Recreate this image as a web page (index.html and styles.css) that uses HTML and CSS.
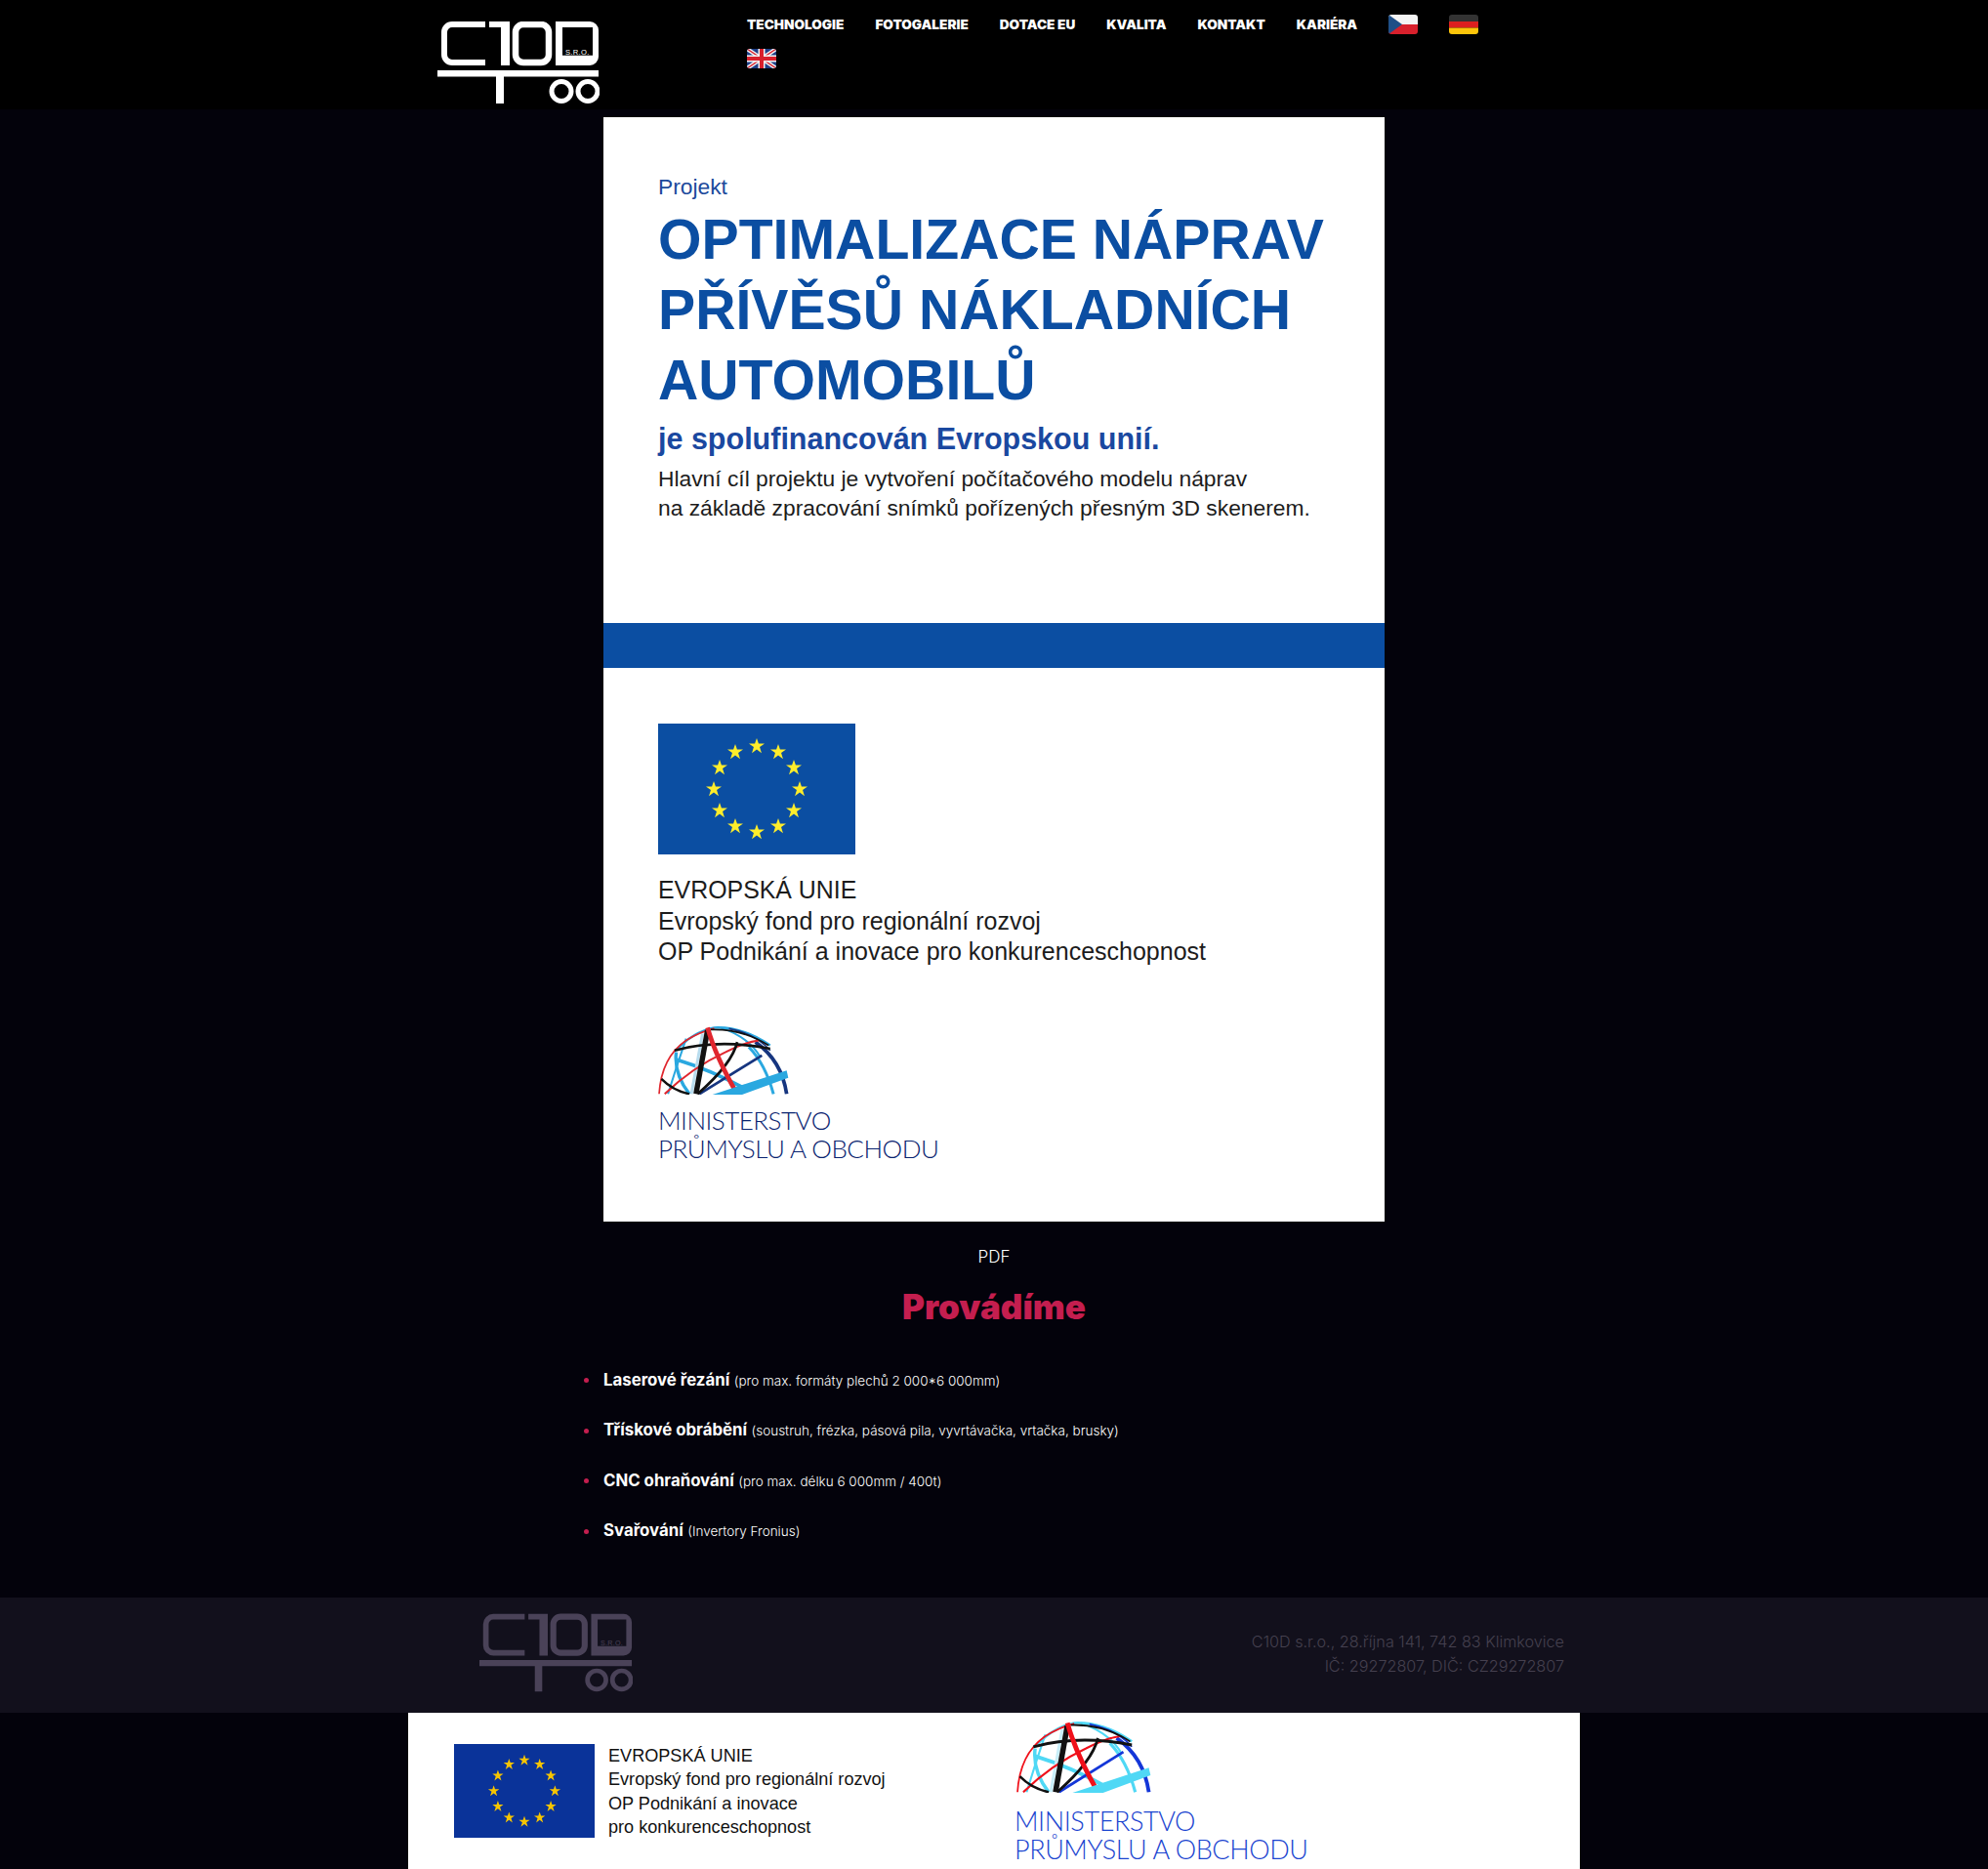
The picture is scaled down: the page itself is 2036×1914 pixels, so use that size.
FILE: index.html
```html
<!DOCTYPE html>
<html lang="cs">
  <head>
    <meta charset="UTF-8" />
    <title>C10D s.r.o. - Dotace EU</title>
    <link rel="stylesheet" href="styles.css">
  </head>
  <body>
    <svg class="defs" width="0" height="0" aria-hidden="true">
      <defs>
        <g id="logo">
          <g fill="none" stroke="currentColor">
            <path d="M57 15H23a8 8 0 0 0-8 8V46a8 8 0 0 0 8 8H57" stroke-width="6" />
            <rect x="88" y="15" width="34" height="39" rx="8" stroke-width="6.5" />
            <circle cx="135" cy="83.5" r="10" stroke-width="5" />
            <circle cx="162" cy="83.5" r="10" stroke-width="5" />
          </g>
          <path fill="currentColor" d="M61 12h21v45h-9V18H61z" />
          <path fill="currentColor" fill-rule="evenodd" d="M129 12h35a9 9 0 0 1 9 9V48a9 9 0 0 1-9 9H129zM136 18V46.7H167V18z" />
          <path fill="currentColor" d="M8 62h165v6.5H8zM68 68h8v28h-8z" />
        </g>
      </defs>
      <symbol id="star" viewBox="0 0 20 20">
        <polygon points="10,0 12.4,7 20,7 13.8,11.4 16.2,19 10,14.4 3.8,19 6.2,11.4 0,7 7.6,7" />
      </symbol>
      <symbol id="euflag" viewBox="0 0 202 134" preserveAspectRatio="none">
        <rect width="202" height="134" class="eu-bg" />
        <g class="eu-stars">
          <use href="#star" x="93" y="15" width="16" height="16" />
          <use href="#star" x="115" y="21" width="16" height="16" />
          <use href="#star" x="131" y="37" width="16" height="16" />
          <use href="#star" x="137" y="59" width="16" height="16" />
          <use href="#star" x="131" y="81" width="16" height="16" />
          <use href="#star" x="115" y="97" width="16" height="16" />
          <use href="#star" x="93" y="103" width="16" height="16" />
          <use href="#star" x="71" y="97" width="16" height="16" />
          <use href="#star" x="55" y="81" width="16" height="16" />
          <use href="#star" x="49" y="59" width="16" height="16" />
          <use href="#star" x="55" y="37" width="16" height="16" />
          <use href="#star" x="71" y="21" width="16" height="16" />
        </g>
      </symbol>
      <symbol id="globe" viewBox="45 38 397 204" preserveAspectRatio="none">
        <g fill="none" stroke-linecap="butt">
          <path class="g-sky" stroke-width="7" d="M100 110Q150 55 215 42Q300 38 385 95" />
          <path class="g-sky" stroke-width="10" d="M100 115Q92 180 140 240" />
          <path class="g-sky" stroke-width="11" d="M100 137Q210 170 310 225" />
          <path class="g-sky" stroke-width="9" d="M320 100Q370 150 395 240" />
          <path class="g-sky" stroke-width="6" d="M235 42Q320 70 355 130" />
          <path class="g-sky" stroke-width="6" d="M130 75Q100 160 75 240" />
          <path class="g-pale" stroke-width="9" d="M146 240L180 60" />
          <path class="g-navy" stroke-width="8" d="M170 240L360 125" />
          <path class="g-navy" stroke-width="11" d="M340 85Q420 140 435 240" />
          <path class="g-navy" stroke-width="5" d="M260 45Q340 60 385 110" />
          <path class="g-red" stroke-width="5" d="M48 240Q55 130 130 80Q170 55 215 44" />
          <path class="g-red" stroke-width="6" d="M65 240Q150 160 250 115Q310 85 350 80" />
          <path stroke="#111" stroke-width="8" d="M95 110Q230 75 385 105" />
          <path stroke="#111" stroke-width="7" d="M55 195Q90 230 140 240" />
          <path stroke="#111" stroke-width="8" d="M165 240Q270 150 285 85" />
          <path stroke="#111" stroke-width="5" d="M205 48Q300 45 380 95" />
          <path stroke="#111" stroke-width="16" d="M160 240L195 50" />
          <path class="g-red" stroke-width="14" d="M195 42Q220 130 285 240" />
        </g>
        <path class="g-wedge" d="M210 242L435 170L440 192L300 242Z" />
      </symbol>
    </svg>

    <header class="site-header">
      <div class="container header-row">
        <a class="logo" href="#">
          <svg viewBox="8 12 166 86" width="166" height="86">
            <use href="#logo" />
            <text x="139" y="45.5" class="logo-sro" fill="currentColor">S.R.O.</text>
          </svg>
        </a>
        <nav class="main-nav">
          <a href="#">Technologie</a>
          <a href="#">Fotogalerie</a>
          <a href="#">Dotace EU</a>
          <a href="#">Kvalita</a>
          <a href="#">Kontakt</a>
          <a href="#">Kariéra</a>
          <a class="flag" href="#">
            <svg viewBox="0 0 30 20" width="30" height="20">
              <rect width="30" height="10" fill="#f4f4f4" />
              <rect y="10" width="30" height="10" fill="#d8202c" />
              <polygon points="0,0 14,10 0,20" fill="#1f4f87" />
            </svg>
          </a>
          <a class="flag" href="#">
            <svg viewBox="0 0 30 20" width="30" height="20">
              <rect width="30" height="7" fill="#333" />
              <rect y="7" width="30" height="6.5" fill="#dc1f1f" />
              <rect y="13.5" width="30" height="6.5" fill="#fcc50a" />
            </svg>
          </a>
          <a class="flag" href="#">
            <svg viewBox="0 0 30 20" width="30" height="20">
              <rect width="30" height="20" fill="#1f3f87" />
              <path d="M0 0L30 20M30 0L0 20" stroke="#f4f4f4" stroke-width="4" />
              <path d="M0 0L30 20M30 0L0 20" stroke="#d8202c" stroke-width="1.4" />
              <path d="M15 0V20M0 10H30" stroke="#f4f4f4" stroke-width="7" />
              <path d="M15 0V20M0 10H30" stroke="#d8202c" stroke-width="4" />
            </svg>
          </a>
        </nav>
      </div>
    </header>

    <main class="content">
      <section class="poster">
        <div class="poster-top">
          <p class="poster-kicker">Projekt</p>
          <h1>OPTIMALIZACE NÁPRAV PŘÍVĚSŮ NÁKLADNÍCH AUTOMOBILŮ</h1>
          <p class="poster-sub">je spolufinancován Evropskou unií.</p>
          <p class="poster-text">Hlavní cíl projektu je vytvoření počítačového modelu náprav<br>na základě zpracování snímků pořízených přesným 3D skenerem.</p>
        </div>
        <div class="poster-band"></div>
        <div class="poster-bottom">
          <svg class="poster-flag" width="202" height="134"><use href="#euflag" /></svg>
          <p class="poster-eu">
            <span class="poster-eu-head">EVROPSKÁ UNIE</span><br>
            Evropský fond pro regionální rozvoj<br>
            OP Podnikání a inovace pro konkurenceschopnost
          </p>
          <svg class="poster-globe" width="134" height="70"><use href="#globe" /></svg>
          <p class="poster-mpo">MINISTERSTVO<br>PRŮMYSLU A OBCHODU</p>
        </div>
      </section>

      <a class="pdf-link" href="#">PDF</a>
      <h2>Provádíme</h2>

      <ul class="services">
        <li><span><strong>Laserové řezání</strong> <small>(pro max. formáty plechů 2 000*6 000mm)</small></span></li>
        <li><span><strong>Třískové obrábění</strong> <small>(soustruh, frézka, pásová pila, vyvrtávačka, vrtačka, brusky)</small></span></li>
        <li><span><strong>CNC ohraňování</strong> <small>(pro max. délku 6 000mm / 400t)</small></span></li>
        <li><span><strong>Svařování</strong> <small>(Invertory Fronius)</small></span></li>
      </ul>
    </main>

    <footer class="site-footer">
      <div class="footer-row">
        <svg class="footer-logo" viewBox="8 12 166 86" width="157" height="83">
          <use href="#logo" />
          <text x="139" y="45.5" class="logo-sro" fill="currentColor">S.R.O.</text>
        </svg>
        <p>C10D s.r.o., 28.října 141, 742 83 Klimkovice<br>IČ: 29272807, DIČ: CZ29272807</p>
      </div>
    </footer>

    <section class="sponsors">
      <div class="sponsor-eu">
        <svg class="sponsor-flag" width="144" height="96"><use href="#euflag" /></svg>
        <p>EVROPSKÁ UNIE<br>Evropský fond pro regionální rozvoj<br>OP Podnikání a inovace<br>pro konkurenceschopnost</p>
      </div>
      <div class="sponsor-mpo">
        <svg class="sponsor-globe" width="138" height="73"><use href="#globe" /></svg>
        <p>MINISTERSTVO<br>PRŮMYSLU A OBCHODU</p>
      </div>
    </section>
  </body>
</html>
```

FILE: styles.css
```css
* {
  box-sizing: border-box;
}
html,
body {
  margin: 0;
  padding: 0;
}
body {
  background: #03020b;
  color: #fff;
  font-family: "Inter", "Liberation Sans", sans-serif;
}
p,
h1,
h2,
ul {
  margin: 0;
  padding: 0;
}
a {
  color: inherit;
  text-decoration: none;
}
.defs {
  display: block;
  height: 0;
}
.logo-sro {
  font-family: "Liberation Sans", sans-serif;
  font-size: 7.6px;
  letter-spacing: 0.3px;
}

/* header */
.site-header {
  background: #000;
  height: 112px;
}
.container {
  width: 1140px;
  margin: 0 auto;
}
.header-row {
  display: flex;
  padding-top: 22px;
}
.logo {
  display: block;
  width: 317px;
  height: 86px;
}
.main-nav {
  display: flex;
  flex-wrap: wrap;
  align-content: flex-start;
  column-gap: 32px;
  row-gap: 15px;
  width: 790px;
  margin-top: -7px;
}
.main-nav a {
  font-size: 13.6px;
  font-weight: 900;
  line-height: 20px;
  text-transform: uppercase;
}
.flag {
  display: block;
  height: 20px;
}
.flag svg {
  display: block;
  border-radius: 3px;
}

/* poster */
.content {
  width: 800px;
  margin: 8px auto 0;
}
.poster {
  background: #fff;
  height: 1131px;
}
.poster-top {
  height: 518px;
  padding: 54px 56px 0;
}
.poster-kicker {
  color: #1c4a9c;
  font: 22.8px/34px "Liberation Sans", sans-serif;
}
.poster h1 {
  color: #0b4ea2;
  font: bold 57.2px/72px "Liberation Sans", sans-serif;
  margin-top: 1px;
  width: 700px;
}
.poster-sub {
  color: #1a48a0;
  font: bold 30.5px/40px "Liberation Sans", sans-serif;
  margin-top: 4px;
}
.poster-text {
  color: #1c1c1c;
  font: 22.8px/29.5px "Liberation Sans", sans-serif;
  margin-top: 7px;
}
.poster-band {
  background: #0b4ea2;
  height: 46px;
}
.poster-bottom {
  padding: 57px 56px 0;
}
.poster-flag {
  display: block;
}
.poster-eu {
  color: #1c1c1c;
  font: 25px/31.5px "Liberation Sans", sans-serif;
  margin-top: 21px;
}
.poster-eu-head {
  font-size: 24.9px;
}
.poster-globe {
  display: block;
  margin-top: 60px;
}
.poster-mpo {
  color: #0a2470;
  font: 300 26px/29px "Lato", sans-serif;
  letter-spacing: -0.5px;
  margin-top: 12px;
}

/* services */
.pdf-link {
  display: block;
  font-size: 17px;
  font-weight: 300;
  line-height: 20px;
  margin-top: 26px;
  text-align: center;
}
.content h2 {
  color: #c41e4f;
  font-size: 35px;
  font-weight: 900;
  line-height: 40px;
  margin-top: 21px;
  text-align: center;
}
.services {
  list-style: none;
  margin-top: 29px;
}
.services li {
  display: flex;
  align-items: center;
  height: 51.5px;
}
.services li::before {
  content: "";
  flex: none;
  width: 5px;
  height: 5px;
  margin: 2px 15px 0 -20px;
  background: #c41e4f;
  border-radius: 50%;
}
.services strong {
  font-size: 16.8px;
  font-weight: 700;
}
.services small {
  font-size: 13.5px;
  font-weight: 300;
}

/* footer */
.site-footer {
  background: #12101c;
  height: 118px;
  margin-top: 43px;
}
.footer-row {
  display: flex;
  justify-content: space-between;
  width: 1111px;
  margin-left: 491px;
  padding-top: 16px;
  color: #4a4258;
}
.footer-row p {
  color: #45404f;
  font-size: 16.2px;
  font-weight: 300;
  line-height: 25px;
  margin-top: 17px;
  text-align: right;
}
.sponsors {
  background: #fff;
  display: flex;
  width: 1200px;
  height: 160px;
  margin: 0 auto;
  overflow: hidden;
}
.sponsor-eu {
  display: flex;
  width: 621px;
  padding: 32px 0 0 47px;
  color: #111;
}
.sponsor-flag {
  flex: none;
}
.sponsor-eu p {
  font: 18.1px/24.3px "Liberation Sans", sans-serif;
  margin-left: 14px;
}
.sponsor-mpo {
  padding-top: 9px;
}
.sponsor-globe {
  display: block;
  margin-left: 2px;
}
.sponsor-mpo p {
  color: #1a44d0;
  font: 300 27px/29px "Lato", sans-serif;
  letter-spacing: -0.4px;
  margin-top: 14px;
}

/* colours of the shared symbols */
.poster-flag {
  --eu-bg: #0b4ea2;
  --eu-star: #ffed2b;
}
.sponsor-flag {
  --eu-bg: #0a3399;
  --eu-star: #f7c500;
}
.eu-bg {
  fill: var(--eu-bg);
}
.eu-stars {
  fill: var(--eu-star);
}
.poster-globe {
  --sky: #2aa8e0;
  --navy: #16357f;
  --red: #e0262e;
  --pale: #b8dcee;
}
.sponsor-globe {
  --sky: #4fd8f5;
  --navy: #1436d8;
  --red: #f0101a;
  --pale: #c8eef8;
}
.g-sky {
  stroke: var(--sky);
}
.g-navy {
  stroke: var(--navy);
}
.g-red {
  stroke: var(--red);
}
.g-pale {
  stroke: var(--pale);
}
.g-wedge {
  fill: var(--sky);
}
```
